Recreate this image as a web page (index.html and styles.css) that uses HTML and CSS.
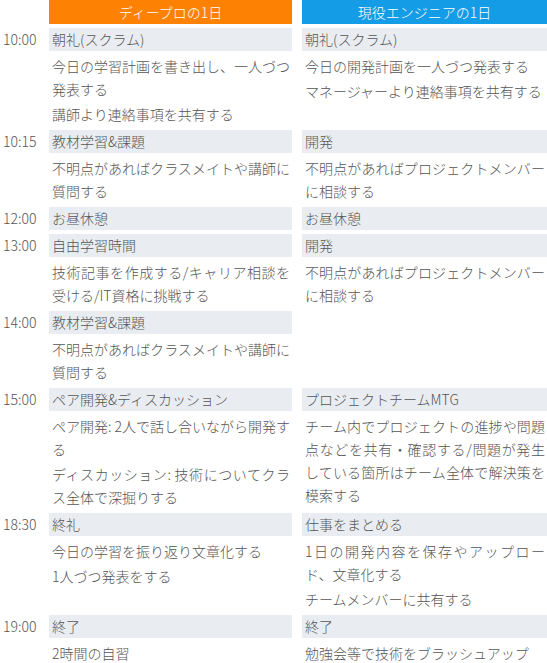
FILE: index.html
```html
<!DOCTYPE html>
<html lang="ja">
<head>
<meta charset="utf-8">
<link rel="stylesheet" href="styles.css">
</head>
<body>
<div class="sched">
  <div class="time"></div>
  <div class="head head-dp">ディープロの1日</div>
  <div class="head head-en">現役エンジニアの1日</div>

  <div class="time">10:00</div>
  <div class="title">朝礼(スクラム)</div>
  <div class="title">朝礼(スクラム)</div>
  <div class="time"></div>
  <div class="desc"><p><span class="j">今日の学習計画を書き出し、一人づつ</span><span>発表する</span></p><p><span>講師より連絡事項を共有する</span></p></div>
  <div class="desc"><p><span>今日の開発計画を一人づつ発表する</span></p><p><span>マネージャーより連絡事項を共有する</span></p></div>

  <div class="time">10:15</div>
  <div class="title">教材学習&amp;課題</div>
  <div class="title">開発</div>
  <div class="time"></div>
  <div class="desc"><p><span class="j">不明点があればクラスメイトや講師に</span><span>質問する</span></p></div>
  <div class="desc"><p><span class="j">不明点があればプロジェクトメンバー</span><span>に相談する</span></p></div>

  <div class="time">12:00</div>
  <div class="title">お昼休憩</div>
  <div class="title">お昼休憩</div>

  <div class="time">13:00</div>
  <div class="title">自由学習時間</div>
  <div class="title">開発</div>
  <div class="time"></div>
  <div class="desc"><p><span class="j">技術記事を作成する/キャリア相談を</span><span>受ける/IT資格に挑戦する</span></p></div>
  <div class="desc"><p><span class="j">不明点があればプロジェクトメンバー</span><span>に相談する</span></p></div>

  <div class="time">14:00</div>
  <div class="title">教材学習&amp;課題</div>
  <div class="empty"></div>
  <div class="time"></div>
  <div class="desc"><p><span class="j">不明点があればクラスメイトや講師に</span><span>質問する</span></p></div>
  <div class="empty"></div>

  <div class="time">15:00</div>
  <div class="title">ペア開発&amp;ディスカッション</div>
  <div class="title">プロジェクトチームMTG</div>
  <div class="time"></div>
  <div class="desc"><p><span class="j">ペア開発: 2人で話し合いながら開発す</span><span>る</span></p><p><span class="j">ディスカッション: 技術についてクラ</span><span>ス全体で深掘りする</span></p></div>
  <div class="desc"><p><span class="j">チーム内でプロジェクトの進捗や問題</span><span class="j">点などを共有・確認する/問題が発生</span><span class="j">している箇所はチーム全体で解決策を</span><span>模索する</span></p></div>

  <div class="time">18:30</div>
  <div class="title">終礼</div>
  <div class="title">仕事をまとめる</div>
  <div class="time"></div>
  <div class="desc"><p><span>今日の学習を振り返り文章化する</span></p><p><span>1人づつ発表をする</span></p></div>
  <div class="desc"><p><span class="j">1日の開発内容を保存やアップロー</span><span>ド、文章化する</span></p><p><span>チームメンバーに共有する</span></p></div>

  <div class="time">19:00</div>
  <div class="title">終了</div>
  <div class="title">終了</div>
  <div class="time"></div>
  <div class="desc"><p><span>2時間の自習</span></p></div>
  <div class="desc"><p><span>勉強会等で技術をブラッシュアップ</span></p></div>
</div>
</body>
</html>
```
FILE: styles.css
```css
html, body {
  margin: 0;
  padding: 0;
  background: #ffffff;
}
body {
  font-family: "Noto Sans CJK JP", "Noto Sans", sans-serif;
  font-size: 14px;
  font-weight: 300;
  color: #555555;
  overflow: hidden;
}
.sched {
  display: grid;
  grid-template-columns: 39px 243px 245px;
  column-gap: 10px;
  row-gap: 4px;
  width: 547px;
}
.time {
  padding-left: 3px;
  line-height: 23px;
  color: #555555;
  white-space: nowrap;
}
.head {
  height: 24px;
  line-height: 24px;
  text-align: center;
  color: #ffffff;
}
.head-dp { background: #fd8204; }
.head-en { background: #159ce6; }
.title {
  background: #e9edf1;
  line-height: 23px;
  height: 23px;
  padding: 0 3px;
  white-space: nowrap;
}
.desc {
  padding: 0 2px 0 3px;
}
.desc p {
  margin: 0;
}
.desc p + p {
  margin-top: 2px;
}
.desc span {
  display: block;
  line-height: 23px;
  white-space: nowrap;
}
.desc span.j {
  text-align: justify;
  text-align-last: justify;
}
```
